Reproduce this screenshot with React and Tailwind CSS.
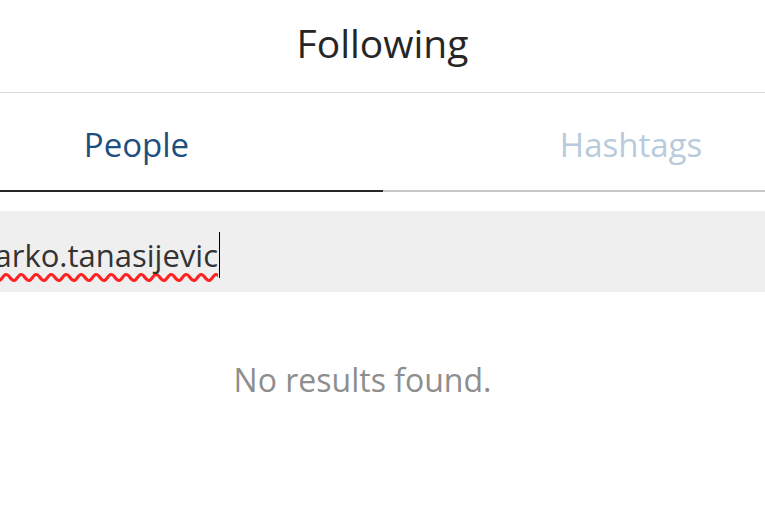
export default function App() {
  return (
    <div
      className="w-[765px] h-[510px] bg-white overflow-hidden"
      style={{ fontFamily: '"Open Sans", "Noto Sans", sans-serif' }}
    >
      <div className="h-[93px] flex items-center justify-center border-b border-[#dbdbdb]">
        <h1 className="text-[39px] text-[#262626] leading-none -mt-[8px]">Following</h1>
      </div>

      <div className="flex h-[99px]">
        <button className="w-[383px] shrink-0 flex items-center justify-center pr-[110px] border-b-2 border-[#262626] text-[#1d4f7f] text-[33px]">
          <span className="mt-[6px]">People</span>
        </button>
        <button className="w-[382px] shrink-0 flex items-center justify-center pl-[114px] border-b-2 border-[#c8c8c8] text-[#b7cbdd] text-[33px]">
          <span className="mt-[6px]">Hashtags</span>
        </button>
      </div>

      <div className="mt-[19px] h-[81px] bg-[#efefef] flex items-center overflow-hidden">
        <span className="text-[31px] text-[#333333] whitespace-nowrap -ml-[20px] mt-[8px] underline decoration-wavy decoration-[#f22] underline-offset-[6px] [text-decoration-skip-ink:none]">
          žarko.tanasijevic
        </span>
        <span className="w-px h-[46px] bg-black ml-[1px] mt-[6px]" />
      </div>

      <div className="pt-[64px] flex justify-center pr-[40px]">
        <p className="text-[32px] text-[#8e8e8e]">No results found.</p>
      </div>
    </div>
  );
}
